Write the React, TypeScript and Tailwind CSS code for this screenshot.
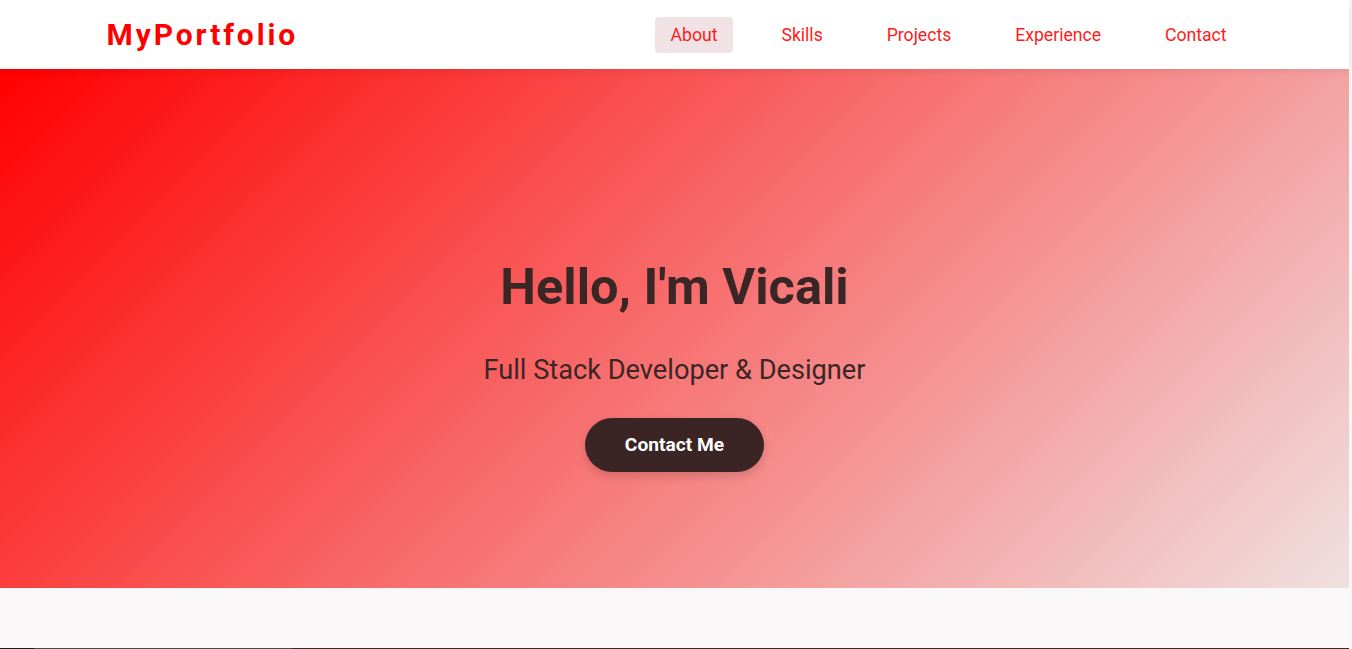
import React from "react";

const navItems = ["About", "Skills", "Projects", "Experience", "Contact"];

export default function App() {
  return (
    <div className="flex w-full h-[649px] overflow-hidden bg-[#f9f7f7]" style={{ fontFamily: "Roboto, 'Noto Sans', sans-serif" }}>
      <div className="flex flex-col flex-1 min-w-0">
        <header className="h-[69px] bg-white shadow-[0_2px_8px_rgba(0,0,0,0.08)] relative z-10 shrink-0">
          <div className="max-w-[1200px] mx-auto px-8 h-full flex items-center justify-between">
            <div className="text-[30px] font-bold text-[#ff0000] tracking-[2.9px]">MyPortfolio</div>
            <nav className="flex items-center gap-8 pt-px">
              {navItems.map((item, i) => (
                <a
                  key={item}
                  className={`px-4 h-9 flex items-center rounded-[4px] text-[17.6px] text-[#ff1a1a] ${i === 0 ? "bg-[#f1e3e5]" : ""}`}
                >
                  {item}
                </a>
              ))}
            </nav>
          </div>
        </header>
        <section className="h-[519px] shrink-0 flex flex-col items-center justify-center bg-[linear-gradient(135deg,#ff0000_0%,#f0e0e0_100%)] text-[#3b2626] pt-[77px]">
          <h1 className="text-[50.5px] font-bold leading-none">Hello, I'm Vicali</h1>
          <p className="text-[27.2px] mt-[45px] leading-none">Full Stack Developer &amp; Designer</p>
          <button className="mt-[34px] w-[179px] h-[54px] rounded-full bg-[#3b2424] text-white font-bold text-[19.2px] shadow-[0_4px_10px_rgba(0,0,0,0.15)]">
            Contact Me
          </button>
        </section>
        <div className="flex-1 bg-[#f9f7f7]" />
        <div className="h-px flex shrink-0">
          <div className="w-[34px] bg-[#1c1c1c]" />
          <div className="w-[258px] bg-[#4a4a4a]" />
          <div className="flex-1 bg-[#3a2a26]" />
        </div>
      </div>
      <div className="w-[3px] bg-[#f7f7f7]" />
    </div>
  );
}
